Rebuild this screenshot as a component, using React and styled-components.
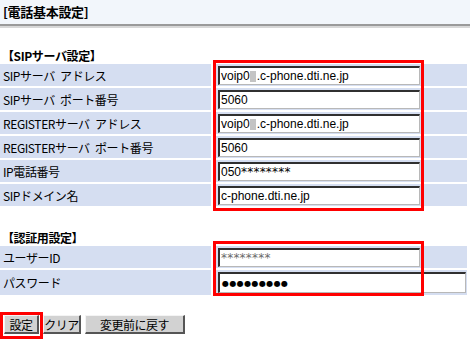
import React from "react";
import styled, { createGlobalStyle } from "styled-components";

const Global = createGlobalStyle`
  html, body { margin: 0; padding: 0; background: #fff; }
  body { width: 470px; height: 341px; overflow: hidden; font-family: "Noto Sans CJK JP", "Liberation Sans", sans-serif; color: #000; }
`;

const Page = styled.div`
  display: flex;
  flex-direction: column;
  width: 470px;
`;

const TitleBar = styled.div`
  height: 24px;
  line-height: 24px;
  background: #f2f6fb;
  padding-left: 3px;
  font-size: 13px;
  font-weight: bold;
  letter-spacing: -0.3px;
  border-bottom: 2px solid #9a9a9a;
  box-shadow: 0 2px 0 #d8d8d8;
`;

const SectionTitle = styled.div`
  margin-top: ${p => p.$top}px;
  height: 17px;
  line-height: 17px;
  padding-left: 2px;
  font-size: 12px;
  font-weight: bold;
  letter-spacing: -0.4px;
`;

const FormGrid = styled.div`
  position: relative;
  display: grid;
  grid-template-columns: 211px 254px;
  column-gap: 2px;
  row-gap: 2px;
  width: 467px;
`;

const Label = styled.div`
  background: #d5def1;
  height: ${p => p.$h || 22}px;
  display: flex;
  align-items: center;
  padding-left: 3px;
  font-size: 12px;
  letter-spacing: -0.4px;
  word-spacing: 3px;
  white-space: pre;
`;

const Value = styled.div`
  background: #d5def1;
  height: ${p => p.$h || 22}px;
  display: flex;
  align-items: center;
  padding-left: 5px;
`;

const Field = styled.div`
  box-sizing: border-box;
  width: ${p => p.$w || 202}px;
  height: ${p => p.$fh || 19}px;
  margin-top: ${p => p.$mt ?? 1}px;
  background: #fff;
  border-top: 2px solid #303030;
  border-left: 2px solid #303030;
  border-right: 1px solid #b8b8b8;
  border-bottom: 1px solid #b8b8b8;
  padding-left: 1px;
  display: flex;
  align-items: center;
  font-family: "Liberation Sans", Arial, sans-serif;
  font-size: 12px;
  color: #000;
  white-space: nowrap;
  overflow: hidden;
`;

const Masked = styled.span`
  display: inline-block;
  width: 6px;
  height: 11px;
  background: #c4c4c4;
  margin: 0 0.5px;
`;

const Stars = styled.span`
  font-family: "DejaVu Sans", sans-serif;
  font-size: 12px;
  letter-spacing: 0.2px;
  color: ${p => p.$muted ? "#6a6a6a" : "#000"};
`;

const Dots = styled.span`
  font-family: "DejaVu Sans", sans-serif;
  font-size: 8px;
  letter-spacing: 0.4px;
  padding-left: 1px;
`;

const Highlight = styled.div`
  position: absolute;
  left: 213px;
  width: 211px;
  top: ${p => p.$top}px;
  bottom: ${p => p.$bottom}px;
  border: 3px solid #ff0000;
  box-sizing: border-box;
  pointer-events: none;
`;

const ButtonRow = styled.div`
  display: flex;
  gap: 4px;
  margin-top: 20px;
  padding-left: 4px;
`;

const Marked = styled.span`
  position: relative;
  display: inline-flex;
  &::after {
    content: "";
    position: absolute;
    left: -4px;
    right: -4px;
    top: -3px;
    bottom: -5px;
    border: 3px solid #ff0000;
  }
`;

const Button = styled.button`
  box-sizing: border-box;
  height: 19px;
  width: ${p => p.$w}px;
  padding: 0;
  background: #d2d2d2;
  border-top: 1px solid #f4f4f4;
  border-left: 1px solid #f4f4f4;
  border-right: 2px solid #555;
  border-bottom: 2px solid #555;
  font-family: "Noto Sans CJK JP", sans-serif;
  font-size: 12px;
  letter-spacing: -0.5px;
  line-height: 15px;
  white-space: nowrap;
  overflow: visible;
  color: #000;
`;

const sipRows = [
  ["SIPサーバ アドレス", "addr"],
  ["SIPサーバ ポート番号", "5060"],
  ["REGISTERサーバ アドレス", "addr"],
  ["REGISTERサーバ ポート番号", "5060"],
  ["IP電話番号", "tel"],
  ["SIPドメイン名", "c-phone.dti.ne.jp"],
];

function FieldValue({ v }) {
  if (v === "addr") {
    return (
      <Field>
        voip0<Masked />.c-phone.dti.ne.jp
      </Field>
    );
  }
  if (v === "tel") {
    return (
      <Field>
        050<Stars>********</Stars>
      </Field>
    );
  }
  return <Field>{v}</Field>;
}

export default function App() {
  return (
    <Page>
      <Global />
      <TitleBar>[電話基本設定]</TitleBar>
      <SectionTitle $top={21}>【SIPサーバ設定】</SectionTitle>
      <FormGrid>
        {sipRows.map(([label, v]) => (
          <React.Fragment key={label}>
            <Label>{label}</Label>
            <Value>
              <FieldValue v={v} />
            </Value>
          </React.Fragment>
        ))}
        <Highlight $top={-4} $bottom={-5} />
      </FormGrid>
      <SectionTitle $top={23}>【認証用設定】</SectionTitle>
      <FormGrid>
        <Label>ユーザーID</Label>
        <Value>
          <Field>
            <Stars $muted>********</Stars>
          </Field>
        </Value>
        <Label $h={25}>パスワード</Label>
        <Value $h={25}>
          <Field $w={248} $fh={21} $mt={0}>
            <Dots>●●●●●●●●●</Dots>
          </Field>
        </Value>
        <Highlight $top={-5} $bottom={-1} />
      </FormGrid>
      <ButtonRow>
        <Marked>
          <Button $w={35}>設定</Button>
        </Marked>
        <Button $w={38}>クリア</Button>
        <Button $w={100}>変更前に戻す</Button>
      </ButtonRow>
    </Page>
  );
}
